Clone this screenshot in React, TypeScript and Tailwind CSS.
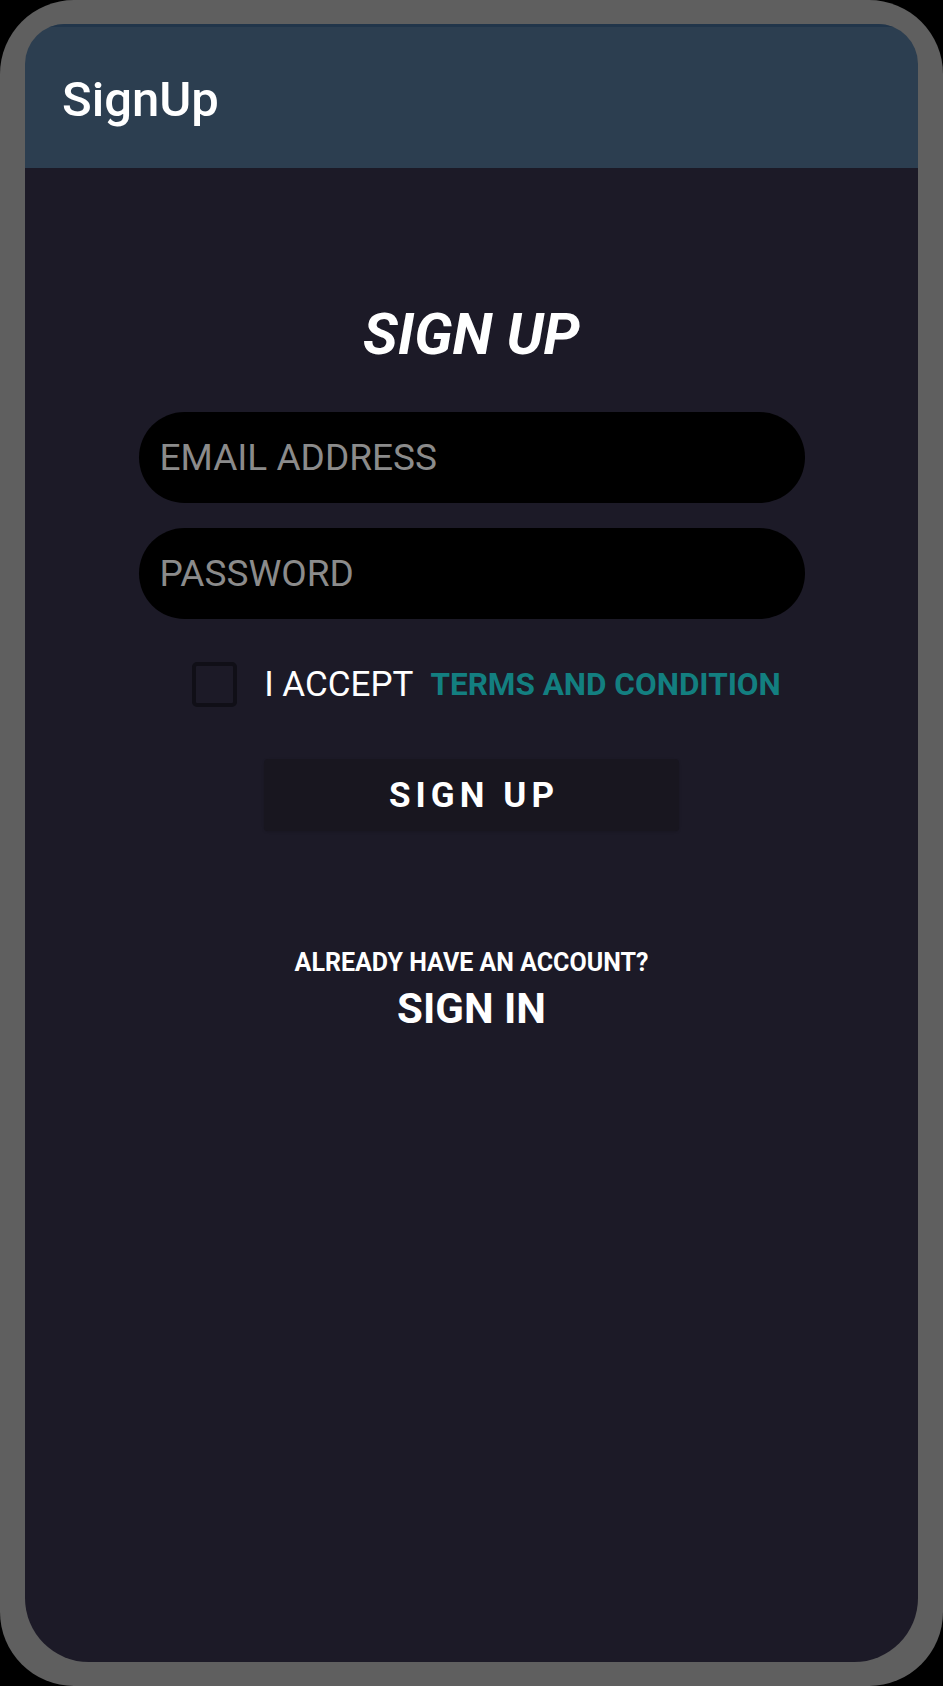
import { useState } from "react";

const SignUpPage = () => {
  const [email, setEmail] = useState<string>("");
  const [password, setPassword] = useState<string>("");
  const [accepted, setAccepted] = useState<boolean>(false);

  return (
    <div className="flex flex-1 flex-col items-center bg-[#1c1a27] pt-[137px] font-['Roboto',sans-serif]">
      {/* Title */}
      <h1 className="text-[58px] leading-[58px] font-bold italic text-white">SIGN UP</h1>

      {/* Inputs */}
      <div className="mt-[49px] flex w-[666px] flex-col gap-[25px]">
        <input
          type="email"
          value={email}
          onChange={(e) => setEmail(e.target.value)}
          placeholder="EMAIL ADDRESS"
          className="h-[91px] w-full rounded-full bg-black pl-[21px] text-[37px] text-white outline-none placeholder:text-[#8b8b8b]"
        />
        <input
          type="password"
          value={password}
          onChange={(e) => setPassword(e.target.value)}
          placeholder="PASSWORD"
          className="h-[91px] w-full rounded-full bg-black pl-[21px] text-[37px] text-white outline-none placeholder:text-[#8b8b8b]"
        />
      </div>

      {/* Terms */}
      <div className="mt-[43px] flex items-center pl-[30px]">
        <button
          onClick={() => setAccepted(!accepted)}
          className="h-[45px] w-[45px] rounded-[5px] border-[4px] border-[#100f17]"
        >
          {accepted && <span className="text-[28px] leading-none text-white">✓</span>}
        </button>
        <span className="ml-[27px] text-[35px] leading-none text-white">I ACCEPT</span>
        <span className="ml-[17px] text-[31.5px] leading-none font-bold text-[#137f80]">
          TERMS AND CONDITION
        </span>
      </div>

      {/* Submit */}
      <button className="mt-[52px] flex h-[72px] w-[415px] items-center justify-center rounded-[4px] bg-[#18161f] pl-[5px] text-[35px] leading-none font-bold tracking-[0.145em] text-white shadow-sm">
        SIGN UP
      </button>

      {/* Footer link */}
      <p className="mt-[119px] text-[25px] leading-[25px] font-bold text-white">ALREADY HAVE AN ACCOUNT?</p>
      <p className="mt-[13px] text-[42px] leading-[42px] font-bold text-white">SIGN IN</p>
    </div>
  );
};

const App = () => {
  return (
    <div className="h-[1686px] w-full bg-black">
      <div className="flex h-full w-full flex-col rounded-[74px] bg-[#5f5f5f] px-[25px] pt-[24px] pb-[24px]">
        <div className="flex flex-1 flex-col overflow-hidden rounded-t-[40px] rounded-b-[64px]">
          {/* Toolbar */}
          <div className="h-[144px] border-t-[3px] border-[#21354a] bg-[#2c3e50] pt-[48px] pl-[37px]">
            <span className="font-['Roboto',sans-serif] text-[49px] leading-[49px] font-medium text-white">
              SignUp
            </span>
          </div>
          <SignUpPage />
        </div>
      </div>
    </div>
  );
};

export default App;
